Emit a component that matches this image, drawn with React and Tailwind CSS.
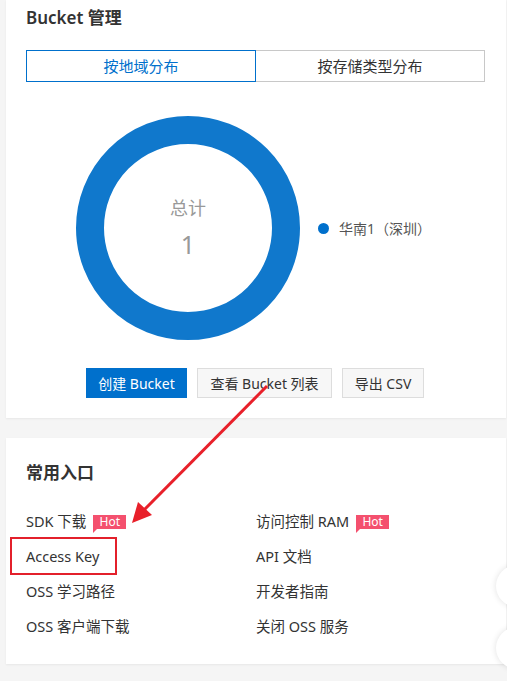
import React from "react"

const font = { fontFamily: '"Noto Sans", "Noto Sans CJK SC", sans-serif' }

function Hot() {
  return (
    <span className="relative ml-[7px] inline-flex h-[14px] w-[33px] items-center justify-center bg-[#f4506e] text-[12px] leading-none text-white">
      Hot
      <span className="absolute left-0 top-[13px] h-0 w-0 border-r-[5px] border-t-[5px] border-r-transparent border-t-[#f4506e]" />
    </span>
  )
}

function Donut() {
  return (
    <svg width="224" height="224" viewBox="0 0 224 224">
      <circle cx="112" cy="112" r="98" fill="none" stroke="#1078cc" strokeWidth="28" />
      <text x="112" y="99" textAnchor="middle" fontSize="18" fill="#999">总计</text>
      <text x="112" y="138" textAnchor="middle" fontSize="25" fill="#999">1</text>
    </svg>
  )
}

const links = [
  ["SDK 下载", true, "访问控制 RAM", true],
  ["Access Key", false, "API 文档", false],
  ["OSS 学习路径", false, "开发者指南", false],
  ["OSS 客户端下载", false, "关闭 OSS 服务", false],
]

export default function App() {
  return (
    <div className="relative h-[681px] w-[507px] overflow-hidden bg-[#f5f5f5] pl-[6px]" style={font}>
      {/* Bucket 管理 */}
      <div className="w-[500px] bg-white px-5 pb-5 pt-[6px] shadow-[0_1px_2px_rgba(0,0,0,0.06)]">
        <h2 className="text-[17px] font-semibold leading-[24px] text-[#333]">Bucket 管理</h2>
        <div className="mt-5 flex h-8 w-[459px] text-[15px]">
          <button className="flex-1 border border-[#0070cc] text-[#0070cc]">按地域分布</button>
          <button className="flex-1 border border-l-0 border-[#c8c8c8] text-[#333]">按存储类型分布</button>
        </div>
        <div className="mt-[34px] flex items-center pl-[50px]">
          <Donut />
          <div className="ml-[18px] flex items-center text-[14px] text-[#555]">
            <span className="mr-[10px] h-[11px] w-[11px] rounded-full bg-[#0070cc]" />
            华南1（深圳）
          </div>
        </div>
        <div className="mt-7 flex gap-[10px] pl-[60px] text-[14px]">
          <button className="h-[30px] w-[101px] bg-[#0070cc] text-white">创建 Bucket</button>
          <button className="h-[30px] w-[135px] border border-[#ddd] bg-[#f7f7f7] text-[#333]">查看 Bucket 列表</button>
          <button className="h-[30px] w-[82px] border border-[#ddd] bg-[#f7f7f7] text-[#333]">导出 CSV</button>
        </div>
      </div>

      {/* 常用入口 */}
      <div className="mt-5 w-[500px] bg-white px-5 pb-5 pt-[23px] shadow-[0_1px_2px_rgba(0,0,0,0.06)]">
        <h2 className="text-[17px] font-semibold leading-[24px] text-[#333]">常用入口</h2>
        <div className="mt-[19px] grid grid-cols-[230px_1fr] text-[14.5px] text-[#333]">
          {links.map(([a, ha, b, hb]) => (
            <React.Fragment key={a}>
              <div className="relative flex h-[35px] items-center">
                {a}
                {ha && <Hot />}
                {a === "Access Key" && (
                  <span className="absolute left-[-16px] top-[-2px] h-[38px] w-[107px] border-2 border-[#e3202b]" />
                )}
              </div>
              <div className="flex h-[35px] items-center">
                {b}
                {hb && <Hot />}
              </div>
            </React.Fragment>
          ))}
        </div>
      </div>

      {/* floating buttons */}
      <div className="absolute left-[496px] top-[565px] h-[42px] w-[42px] rounded-full bg-white shadow-[0_0_6px_rgba(0,0,0,0.12)]" />
      <div className="absolute left-[496px] top-[627px] h-[42px] w-[42px] rounded-full bg-white shadow-[0_0_6px_rgba(0,0,0,0.12)]" />

      {/* annotation arrow */}
      <svg className="pointer-events-none absolute left-0 top-0" width="507" height="681">
        <line x1="267" y1="386" x2="143" y2="511" stroke="#e8202a" strokeWidth="3" />
        <polygon points="132,523 138,502 152,515" fill="#e8202a" />
      </svg>
    </div>
  )
}
